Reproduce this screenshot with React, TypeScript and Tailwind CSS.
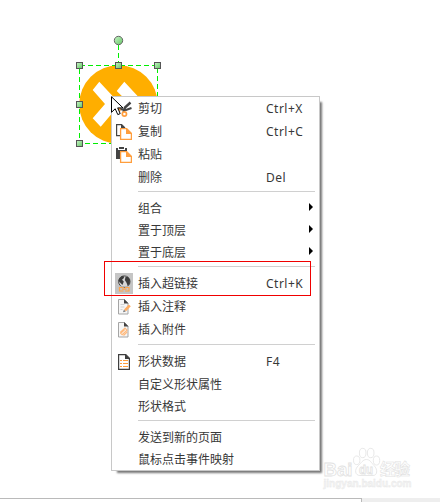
import type { ReactNode } from 'react'

interface MenuItem {
  label: string
  shortcut?: string
  icon?: ReactNode
  submenu?: boolean
  tall?: boolean
  active?: boolean
}

function CutIcon() {
  return (
    <svg width="16" height="16" viewBox="0 0 16 16" fill="none">
      <path d="M14.5 1.5 9 6.5 7.5 11" stroke="#444" strokeWidth="2.4" />
      <path d="m15.5 7-5.5 2-7-1" stroke="#444" strokeWidth="2" />
      <circle cx="8.4" cy="13" r="2.1" stroke="#ff9e3d" strokeWidth="1.7" />
      <circle cx="2.4" cy="9" r="1.6" stroke="#ff9e3d" strokeWidth="1.4" />
    </svg>
  )
}

function CopyIcon() {
  return (
    <svg width="16" height="16" viewBox="0 0 16 16">
      <path d="M.6.6h5l3 3v8h-8z" fill="#fff" stroke="#444" strokeWidth="1.2" />
      <path d="M5 0v4h4z" fill="#444" />
      <path d="M4.6 4.6h6.1l4.7 4.7v6.1H4.6z" fill="#fff" stroke="#ff9e3d" strokeWidth="1.3" />
      <path d="M10 4v6h6z" fill="#ff9e3d" />
    </svg>
  )
}

function PasteIcon() {
  return (
    <svg width="16" height="16" viewBox="0 0 16 16">
      <path d="M0 1h2v2h7V1h2v11H0z" fill="#444" />
      <path d="M3 0h5v2H3z" fill="#444" />
      <path d="M4.6 4.6h6.1l4.7 4.7v6.1H4.6z" fill="#fff" stroke="#ff9e3d" strokeWidth="1.3" />
      <path d="M10 4v6h6z" fill="#ff9e3d" />
    </svg>
  )
}

function LinkIcon() {
  return (
    <svg width="16" height="20" viewBox="0 0 16 20" fill="none">
      <circle cx="8.3" cy="8.6" r="5.7" fill="#d6d6d6" stroke="#484848" />
      <path
        d="m3.5 5 2.5-2 2.5.5-1 2-1.500 1.200 1.800 1.800L6.500 12l-2-2-2-2zM9.500 4l2.500-.3 2 3-.3 4-2 2-1.200-3L8.800 7z"
        fill="#3c3c3c"
      />
      <path
        d="M7.500 14.500H3.500v3.500h4M9 14.500h4V18H9M6 16.200h4.500"
        stroke="#c5c5c5"
        strokeWidth="2.4"
      />
      <path
        d="M7.500 14.500H3.500v3.500h4M9 14.500h4V18H9M6 16.200h4.500"
        stroke="#ffa44a"
        strokeWidth="1.2"
      />
    </svg>
  )
}

function PageOutline() {
  return (
    <>
      <path d="M2.5.5h6l3.500 3.500v11H2.500z" fill="#f6f6f6" stroke="#a5a5a5" />
      <path d="M8 0v4.500h4.500z" fill="#444" />
    </>
  )
}

function NoteIcon() {
  return (
    <svg width="16" height="16" viewBox="0 0 16 16">
      <PageOutline />
      <path d="M4.500 5.500h4M4.500 8h4M4.500 10.500h2" stroke="#d2d2d2" />
      <path d="m8 10.500 4.800-5 2 1.800-4.800 5z" fill="#ffad62" />
      <path d="m7 13.300.9-2.600 1.900 1.700z" fill="#777" />
    </svg>
  )
}

function AttachmentIcon() {
  return (
    <svg width="16" height="16" viewBox="0 0 16 16">
      <PageOutline />
      <path
        d="m4.200 10.500 4.800-4.300 2 2-4.800 4.500-1.500-1.500 4-3.700M7.500 13.500l3.800-3.600"
        fill="none"
        stroke="#ffb97c"
        strokeWidth="1.2"
      />
    </svg>
  )
}

function DataIcon() {
  return (
    <svg width="16" height="16" viewBox="0 0 16 16">
      <path d="M2.600.6h7.200l3.600 3.600v11.200H2.600z" fill="#fff" stroke="#3f3f3f" strokeWidth="1.2" />
      <path d="M9 0v5h5z" fill="#3f3f3f" />
      <path d="M4 6.500h2M7 6.500h5M4 9.500h2M7 9.500h5M4 12.500h2M7 12.500h5" stroke="#ff9e3d" />
    </svg>
  )
}

const groups: MenuItem[][] = [
  [
    { label: '剪切', shortcut: 'Ctrl+X', icon: <CutIcon />, tall: true },
    { label: '复制', shortcut: 'Ctrl+C', icon: <CopyIcon />, tall: true },
    { label: '粘贴', icon: <PasteIcon />, tall: true },
    { label: '删除', shortcut: 'Del' },
  ],
  [
    { label: '组合', submenu: true },
    { label: '置于顶层', submenu: true },
    { label: '置于底层', submenu: true },
  ],
  [
    { label: '插入超链接', shortcut: 'Ctrl+K', icon: <LinkIcon />, tall: true, active: true },
    { label: '插入注释', icon: <NoteIcon />, tall: true },
    { label: '插入附件', icon: <AttachmentIcon />, tall: true },
  ],
  [
    { label: '形状数据', shortcut: 'F4', icon: <DataIcon />, tall: true },
    { label: '自定义形状属性' },
    { label: '形状格式' },
  ],
  [{ label: '发送到新的页面' }, { label: '鼠标点击事件映射' }],
]

function MenuRow({ item }: { item: MenuItem }) {
  return (
    <li className={`flex items-center ${item.tall ? 'h-[23px]' : 'h-[22px] pt-0.5'}`}>
      <span className="flex w-[26px] shrink-0 items-center pl-[3px]">
        {item.icon ? (
          <span
            className={`flex h-[21px] w-[18px] items-start justify-center ${item.active ? 'bg-[#c5c5c5]' : 'pt-[3px]'}`}
          >
            {item.icon}
          </span>
        ) : null}
      </span>
      <span className="w-32 whitespace-nowrap">{item.label}</span>
      {item.shortcut ? (
        <span className="tracking-[0.5px]">{item.shortcut}</span>
      ) : null}
      {item.submenu ? (
        <svg className="mb-[5px] ml-[43px]" width="4" height="8" viewBox="0 0 4 8">
          <path d="M0 0v8l4-4z" fill="#000" />
        </svg>
      ) : null}
    </li>
  )
}

function ContextMenu() {
  return (
    <div className="absolute top-24 left-[111px] w-[209px] border border-[#c8c8c8] bg-white text-[12px] leading-none text-[#383838] shadow-[4px_4px_2px_-2px_#777]">
      {groups.map((items, index) => (
        <ul key={items[0].label}>
          {index > 0 ? (
            <li className="h-[9px] pt-[3px] pr-1 pl-[26px]">
              <div className="h-px bg-[#d0d0d0]" />
            </li>
          ) : null}
          {items.map((item) => (
            <MenuRow key={item.label} item={item} />
          ))}
        </ul>
      ))}
    </div>
  )
}

const handles = [
  [79.5, 65.5],
  [118.5, 65.5],
  [157.5, 65.5],
  [79.5, 104.5],
  [79.5, 143.5],
]

function SelectedShape() {
  return (
    <svg className="absolute top-0 left-0" width="200" height="160" viewBox="0 0 200 160">
      <defs>
        <linearGradient id="handle" x1="0" y1="0" x2="1" y2="1">
          <stop offset="0" stopColor="#c8f5c8" />
          <stop offset="1" stopColor="#65c565" />
        </linearGradient>
      </defs>
      <circle cx="118.5" cy="104.5" r="39.3" fill="#ffae00" />
      <path
        d="m99.3 81.7 20.7 22.3-19.3 22.7-8-8.4 12.3-14.3-12.3-14zM124.3 81.7 145 104l-19.3 22.7-8-8.4L130 104l-13.3-13z"
        fill="#fff"
      />
      <path
        d="M79.5 65.5h78v78h-78z"
        fill="none"
        stroke="#00ef00"
        strokeDasharray="5 3"
        shapeRendering="crispEdges"
      />
      <path d="M118.5 45v18" stroke="#00ef00" strokeDasharray="5 3" />
      <circle cx="118.5" cy="40.5" r="4.2" fill="url(#handle)" stroke="#666" />
      {handles.map(([x, y]) => (
        <rect
          key={`${x}:${y}`}
          x={x - 3}
          y={y - 3}
          width="6"
          height="6"
          fill="url(#handle)"
          stroke="#555"
        />
      ))}
    </svg>
  )
}

function Cursor() {
  return (
    <svg className="absolute top-24 left-[111px]" width="13" height="20" viewBox="0 0 13 20">
      <path
        d="M.5.8v15.500l3.700-3.500 2.600 5.800 2.400-1-2.500-5.700H12z"
        fill="#fff"
        stroke="#000"
      />
    </svg>
  )
}

function Watermark() {
  return (
    <svg
      className="absolute top-[444px] left-[320px] font-['Liberation_Sans','Noto_Sans_CJK_SC',sans-serif] font-bold"
      width="100"
      height="50"
      viewBox="0 0 100 50"
      fill="#fff"
      stroke="#e2e2e2"
      strokeWidth="0.8"
    >
      <text x="3.5" y="31.5" fontSize="19" textLength="29" lengthAdjust="spacingAndGlyphs">
        Bai
      </text>
      <ellipse cx="36.7" cy="16.3" rx="3.2" ry="4.3" />
      <ellipse cx="42.7" cy="9" rx="3.3" ry="4.7" />
      <ellipse cx="50.7" cy="9" rx="3.3" ry="4.7" />
      <ellipse cx="56.5" cy="16.5" rx="3.2" ry="4.5" />
      <path d="M46.5 15.5c3.500 0 5 3.500 7.500 6 4 4 3.500 10-1 10H40c-5 0-6-6-1.500-10 3-2.500 4-6 8-6z" />
      <text x="39" y="29.5" fontSize="12.5" textLength="14" lengthAdjust="spacingAndGlyphs">
        du
      </text>
      <text x="60" y="30.5" fontSize="15.5" textLength="30" strokeWidth="0.6">
        经验
      </text>
      <text
        x="3.5"
        y="43"
        fontSize="10"
        textLength="88"
        fill="#f4f4f4"
        stroke="#e8e8e8"
        strokeWidth="0.4"
      >
        jingyan.baidu.com
      </text>
    </svg>
  )
}

export default function App() {
  return (
    <div className="relative flex h-[502px] w-[440px] flex-col overflow-hidden bg-white font-['Noto_Sans','Noto_Sans_CJK_SC',sans-serif]">
      <main className="flex-1">
        <SelectedShape />
        <ContextMenu />
        <Cursor />
        <div className="absolute top-[261px] left-[104px] h-[35px] w-[207px] border border-[#f00000]" />
        <Watermark />
      </main>
      <footer className="flex h-1">
        <div className="w-[362px] border-t border-r border-[#bababa]" />
        <div className="flex-1 bg-[#eee]" />
      </footer>
    </div>
  )
}
